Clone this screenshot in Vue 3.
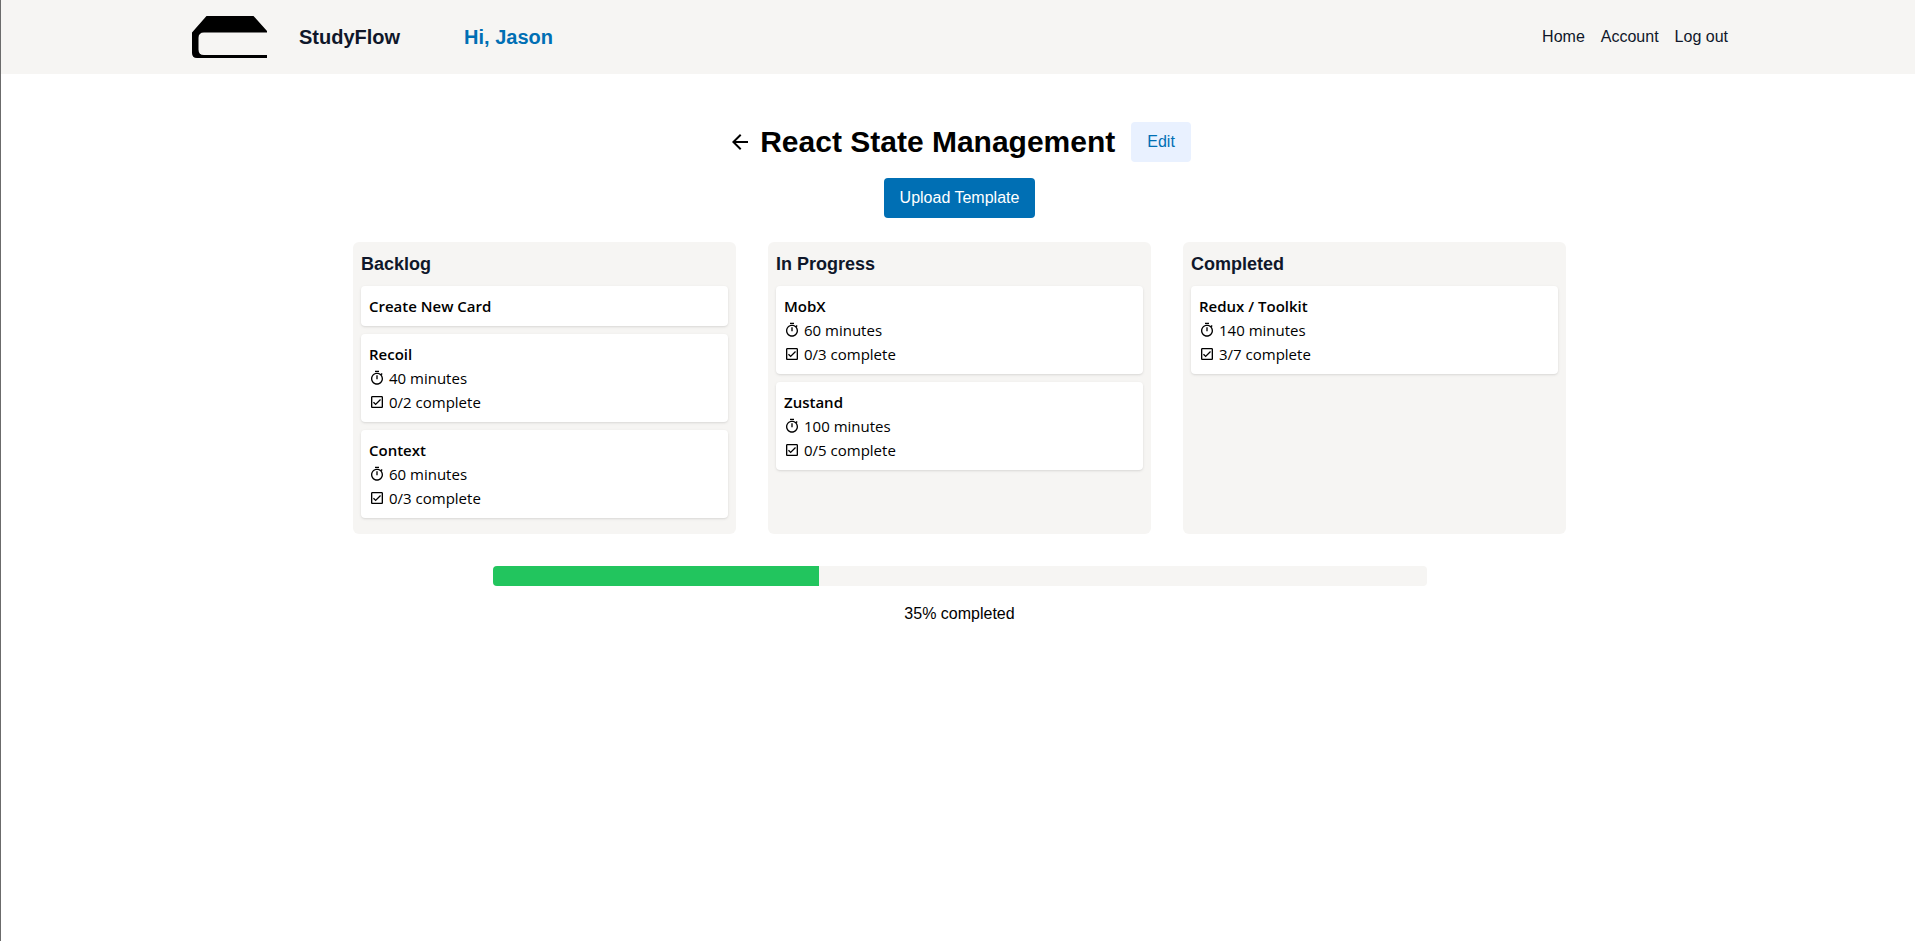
<script setup>
import { computed } from 'vue'

const links = ['Home', 'Account', 'Log out']
const progress = 35

const columns = [
  {
    title: 'Backlog',
    creatable: true,
    cards: [
      { name: 'Recoil', minutes: 40, done: 0, total: 2 },
      { name: 'Context', minutes: 60, done: 0, total: 3 },
    ],
  },
  {
    title: 'In Progress',
    cards: [
      { name: 'MobX', minutes: 60, done: 0, total: 3 },
      { name: 'Zustand', minutes: 100, done: 0, total: 5 },
    ],
  },
  {
    title: 'Completed',
    cards: [{ name: 'Redux / Toolkit', minutes: 140, done: 3, total: 7 }],
  },
]

const fillStyle = computed(() => ({ width: `${progress}%` }))
</script>

<template>
  <div class="page">
    <header class="topbar">
      <svg class="logo" viewBox="0 0 75 42" aria-hidden="true">
        <path d="M14.5 0H61.5L75 15V16.500H12Q6.500 16.500 6.500 22V33.500Q6.500 39 12 39H75V42H5Q0 42 0 37V16.500Z" />
      </svg>
      <span class="brand">StudyFlow</span>
      <span class="greeting">Hi, Jason</span>
      <nav class="nav">
        <a v-for="link in links" :key="link" href="#">{{ link }}</a>
      </nav>
    </header>

    <main class="content">
      <div class="heading">
        <a class="back" href="#" aria-label="Back">
          <svg viewBox="0 0 24 24" aria-hidden="true">
            <path d="M20 11H7.830l5.590-5.590L12 4l-8 8 8 8 1.410-1.410L7.830 13H20v-2z" />
          </svg>
        </a>
        <h1>React State Management</h1>
        <button type="button" class="button soft">Edit</button>
      </div>
      <button type="button" class="button solid">Upload Template</button>

      <div class="board">
        <section v-for="column in columns" :key="column.title" class="column">
          <h2>{{ column.title }}</h2>
          <button v-if="column.creatable" type="button" class="card create">Create New Card</button>
          <article v-for="card in column.cards" :key="card.name" class="card">
            <h3>{{ card.name }}</h3>
            <p>
              <svg viewBox="0 0 24 24" aria-hidden="true">
                <path d="M15 1H9v2h6V1zm-4 13h2V8h-2v6zm8.030-6.610 1.420-1.420c-.43-.51-.9-.99-1.410-1.410l-1.420 1.420C16.070 4.740 14.120 4 12 4c-4.970 0-9 4.030-9 9s4.020 9 9 9 9-4.030 9-9c0-2.120-.74-4.070-1.970-5.610zM12 20c-3.870 0-7-3.130-7-7s3.130-7 7-7 7 3.130 7 7-3.130 7-7 7z" />
              </svg>
              {{ card.minutes }} minutes
            </p>
            <p>
              <svg viewBox="0 0 24 24" aria-hidden="true">
                <path d="M19 3H5c-1.100 0-2 .9-2 2v14c0 1.100.9 2 2 2h14c1.100 0 2-.9 2-2V5c0-1.100-.9-2-2-2zm0 16H5V5h14v14zM17.990 9l-1.410-1.420-6.590 6.590-2.580-2.570-1.420 1.410 4 3.990z" />
              </svg>
              {{ card.done }}/{{ card.total }} complete
            </p>
          </article>
        </section>
      </div>

      <div class="track" role="progressbar" aria-label="Completed" :aria-valuenow="progress">
        <div class="fill" :style="fillStyle"></div>
      </div>
      <p class="summary">{{ progress }}% completed</p>
    </main>
  </div>
</template>

<style>
body {
  margin: 0;
  background: #fff;
}
</style>

<style scoped>
* {
  box-sizing: border-box;
}

h1,
h2,
h3,
p {
  margin: 0;
}

.page {
  min-height: 100vh;
  border-left: 1px solid #6b6b6b;
  font: 16px/24px "Liberation Sans", Arial, sans-serif;
  color: #000;
}

.topbar {
  display: flex;
  align-items: center;
  height: 74px;
  padding: 0 187px 0 191px;
  background: #f6f5f3;
  color: #0f172a;
}

.logo {
  width: 75px;
  height: 42px;
}

.brand,
.greeting {
  font-size: 20px;
  line-height: 28px;
  font-weight: 700;
}

.brand {
  margin-left: 32px;
}

.greeting {
  margin-left: 64px;
  color: #006fb4;
}

.nav {
  display: flex;
  gap: 16px;
  margin-left: auto;
}

.nav a {
  color: inherit;
  text-decoration: none;
}

.content {
  display: flex;
  flex-direction: column;
  align-items: center;
  padding: 48px 0 32px 3px;
}

.heading {
  display: flex;
  align-items: center;
}

.back {
  display: flex;
  margin-right: 8px;
}

.back svg {
  width: 24px;
  height: 24px;
}

h1 {
  font-size: 30px;
  line-height: 36px;
  font-weight: 700;
}

.button {
  height: 40px;
  padding: 0 16px;
  border: 0;
  border-radius: 4px;
  font: inherit;
  cursor: pointer;
}

.soft {
  margin-left: 16px;
  background: #e9f1ff;
  color: #006fb4;
}

.solid {
  margin-top: 16px;
  background: #006fb4;
  color: #fff;
}

.board {
  display: grid;
  grid-template-columns: repeat(3, minmax(0, 1fr));
  gap: 32px;
  width: 100%;
  max-width: 1213px;
  margin-top: 24px;
}

.column {
  display: flex;
  flex-direction: column;
  gap: 8px;
  padding: 8px 8px 16px;
  border-radius: 6px;
  background: #f6f5f3;
}

h2 {
  font-size: 18px;
  line-height: 28px;
  font-weight: 700;
  color: #0f172a;
}

.card {
  padding: 8px;
  border: 0;
  border-radius: 4px;
  background: #fff;
  box-shadow: 0 1px 3px rgba(0, 0, 0, 0.1), 0 1px 2px -1px rgba(0, 0, 0, 0.1);
  font: 15px/24px "Open Sans", "Noto Sans", sans-serif;
  color: #000;
  text-align: left;
}

.create,
h3 {
  font-size: 15px;
  line-height: 24px;
  font-weight: 600;
}

.create {
  cursor: pointer;
}

.card p {
  display: flex;
  align-items: center;
  gap: 4px;
}

.card svg {
  width: 16px;
  height: 16px;
}

.track {
  width: 77%;
  max-width: 934px;
  height: 20px;
  margin-top: 32px;
  border-radius: 4px;
  background: #f6f5f3;
  overflow: hidden;
}

.fill {
  height: 100%;
  background: #22c55e;
}

.summary {
  margin-top: 16px;
}
</style>
